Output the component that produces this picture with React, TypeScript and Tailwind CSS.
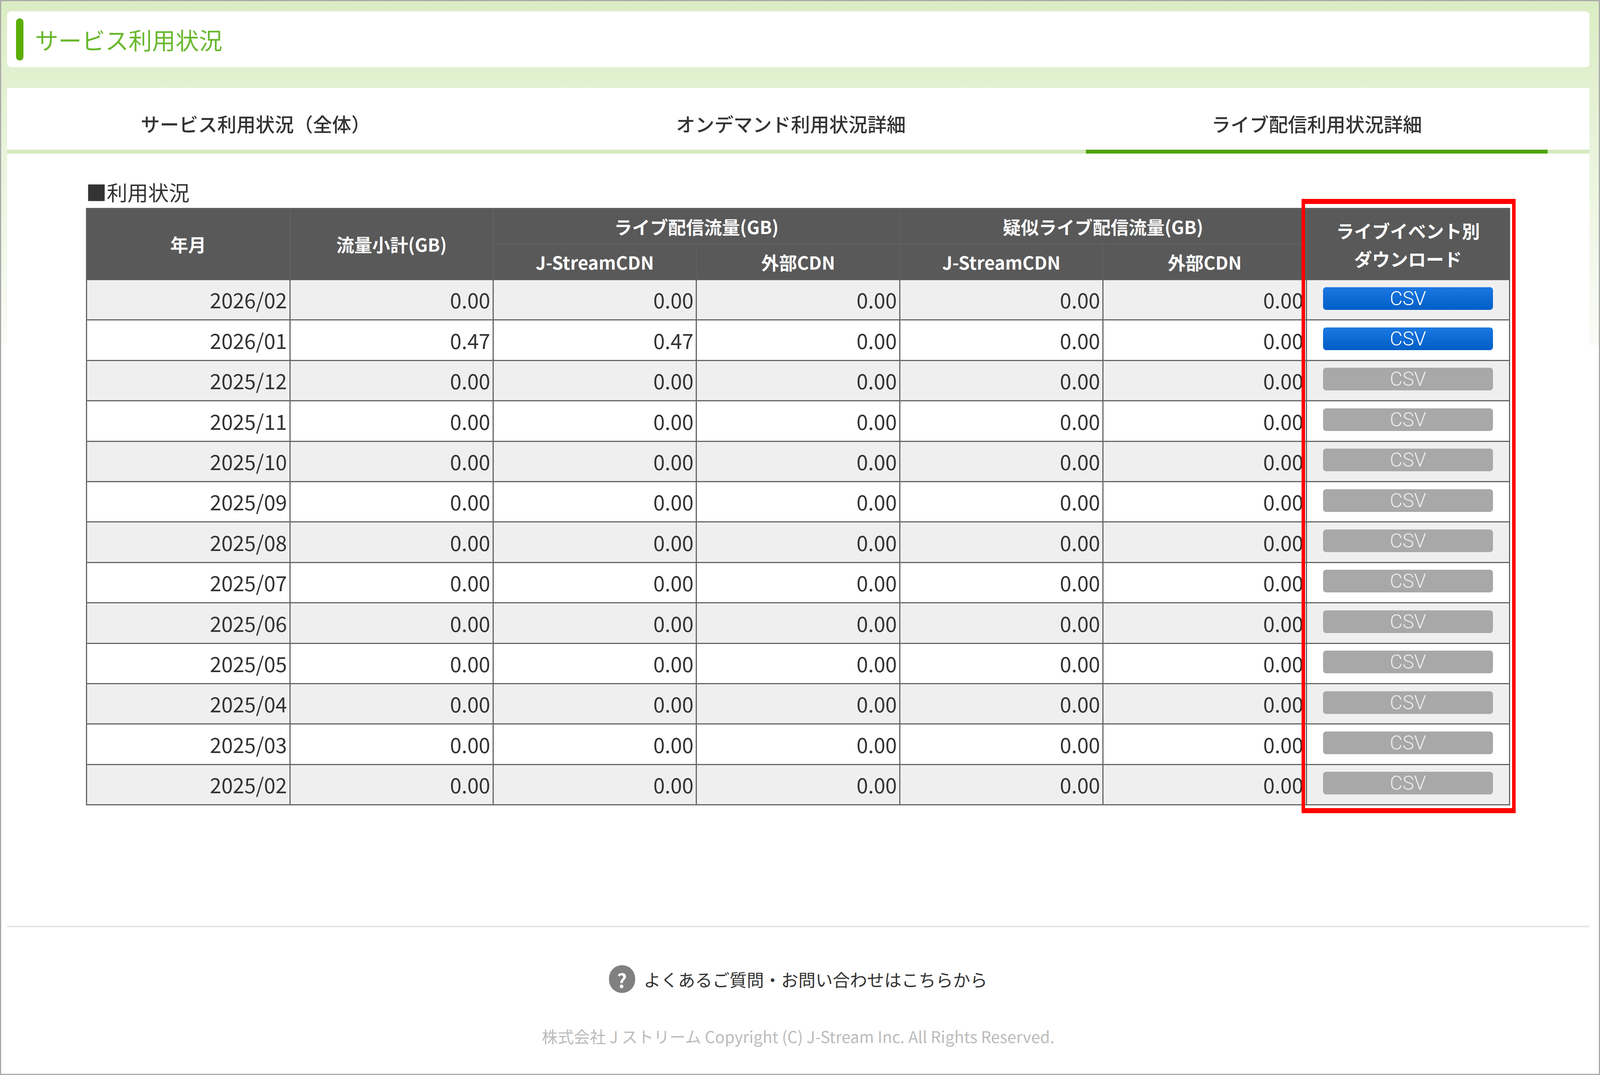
// 横方向はすべて比率で組む(基準幅 5901px)。窓が狭くても全列が収まる。
const rows = [
  { month: "2026/02", total: "0.00", live: "0.00", active: true },
  { month: "2026/01", total: "0.47", live: "0.47", active: true },
  { month: "2025/12", total: "0.00", live: "0.00", active: false },
  { month: "2025/11", total: "0.00", live: "0.00", active: false },
  { month: "2025/10", total: "0.00", live: "0.00", active: false },
  { month: "2025/09", total: "0.00", live: "0.00", active: false },
  { month: "2025/08", total: "0.00", live: "0.00", active: false },
  { month: "2025/07", total: "0.00", live: "0.00", active: false },
  { month: "2025/06", total: "0.00", live: "0.00", active: false },
  { month: "2025/05", total: "0.00", live: "0.00", active: false },
  { month: "2025/04", total: "0.00", live: "0.00", active: false },
  { month: "2025/03", total: "0.00", live: "0.00", active: false },
  { month: "2025/02", total: "0.00", live: "0.00", active: false },
];

const thClass = "border-[3px] border-[#5f5f5f] bg-[#595959] p-0 text-center align-middle font-bold text-white";
const tdClass = "border-[3px] border-[#666666] pr-[6px] text-right align-middle";

function Tab({ label, active, className }: { label: string; active?: boolean; className: string }) {
  return (
    <div
      className={`-mb-[10px] flex h-[168px] w-[29.17%] items-center justify-center border-b-[10px] pt-[24px] text-[49px] font-medium text-[#333333] ${className} ${
        active ? "border-[#4fa30a]" : "border-transparent"
      }`}
    >
      {label}
    </div>
  );
}

function CsvButton({ active }: { active: boolean }) {
  return (
    <div
      className={`mx-auto flex h-[58px] w-[84%] items-center justify-center rounded-[8px] font-['Roboto',sans-serif] text-[50px] font-light leading-none ${
        active ? "bg-gradient-to-b from-[#1b78e2] to-[#005ec6] text-white" : "bg-[#a8a8a8] text-[#ececec]"
      }`}
    >
      CSV
    </div>
  );
}

export default function App() {
  return (
    <div className="relative h-[2751px] w-full overflow-hidden border-[3px] border-[#aaaaaa] bg-white pl-[0.356%] pr-[0.593%] pt-[26px] font-['Noto_Sans_CJK_JP','Noto_Sans',sans-serif] text-[#333333]">
      {/* 背景のグラデーション */}
      <div className="absolute inset-x-0 top-0 h-[880px] bg-gradient-to-b from-[#dbedc4] to-[#fafbf7]" />

      <div className="relative">
        <div className="flex h-[143px] items-center rounded-[10px] bg-white pl-[0.58%]">
          <span className="h-[108px] w-[0.46%] rounded-full bg-[#5cae06]" />
          <h1 className="ml-[0.74%] text-[60px] font-normal leading-none text-[#6ab82e]">サービス利用状況</h1>
        </div>

        <div className="mt-[53px] bg-white">
          <div className="flex h-[168px] border-b-[10px] border-[#d5e9c0]">
            <Tab label="サービス利用状況（全体）" className="ml-[1.13%]" />
            <Tab label="オンデマンド利用状況詳細" className="ml-[4.66%]" />
            <Tab label="ライブ配信利用状況詳細" active className="ml-[4.06%]" />
          </div>

          <div className="mx-auto w-[90%] pt-[68px]">
            <h2 className="mb-[11px] text-[53px] font-normal leading-[60px]">■利用状況</h2>
            <table className="w-full table-fixed border-collapse text-[53px]">
              <thead>
                <tr className="h-[91px] text-[46px]">
                  <th rowSpan={2} className={thClass}>年月</th>
                  <th rowSpan={2} className={thClass}>流量小計(GB)</th>
                  <th colSpan={2} className={thClass}>ライブ配信流量(GB)</th>
                  <th colSpan={2} className={thClass}>疑似ライブ配信流量(GB)</th>
                  <th rowSpan={2} className={`${thClass} leading-[72px]`}>
                    ライブイベント別
                    <br />
                    ダウンロード
                  </th>
                </tr>
                <tr className="h-[91px] text-[46px]">
                  <th className={thClass}>J-StreamCDN</th>
                  <th className={thClass}>外部CDN</th>
                  <th className={thClass}>J-StreamCDN</th>
                  <th className={thClass}>外部CDN</th>
                </tr>
              </thead>
              <tbody>
                {rows.map((row, i) => (
                  <tr key={row.month} className={`h-[103.4px] ${i % 2 === 0 ? "bg-[#efefef]" : "bg-white"}`}>
                    <td className={tdClass}>{row.month}</td>
                    <td className={tdClass}>{row.total}</td>
                    <td className={tdClass}>{row.live}</td>
                    <td className={tdClass}>0.00</td>
                    <td className={tdClass}>0.00</td>
                    <td className={tdClass}>0.00</td>
                    <td className="border-[3px] border-[#666666] pb-[24px] pt-[17px]">
                      <CsvButton active={row.active} />
                    </td>
                  </tr>
                ))}
              </tbody>
            </table>
          </div>

          <div className="mt-[308px] border-t-[4px] border-[#e6e6e6] pt-[97px]">
            <div className="flex items-center justify-center gap-[22px]">
              <span className="flex h-[71px] w-[67px] items-center justify-center rounded-full bg-[#808080] text-[50px] font-bold leading-none text-white">
                ?
              </span>
              <span className="text-[44px] leading-none">よくあるご質問・お問い合わせはこちらから</span>
            </div>
            <p className="mt-[80px] text-center text-[41px] leading-[60px] text-[#bbbbbb]">
              株式会社 J ストリーム Copyright (C) J-Stream Inc. All Rights Reserved.
            </p>
          </div>
        </div>
      </div>

      {/* 注目箇所の赤枠 */}
      <div className="absolute left-[81.39%] top-[506px] h-[1572px] w-[13.4%] border-x-[0.22vw] border-y-[13px] border-[#ff0000]" />
    </div>
  );
}
